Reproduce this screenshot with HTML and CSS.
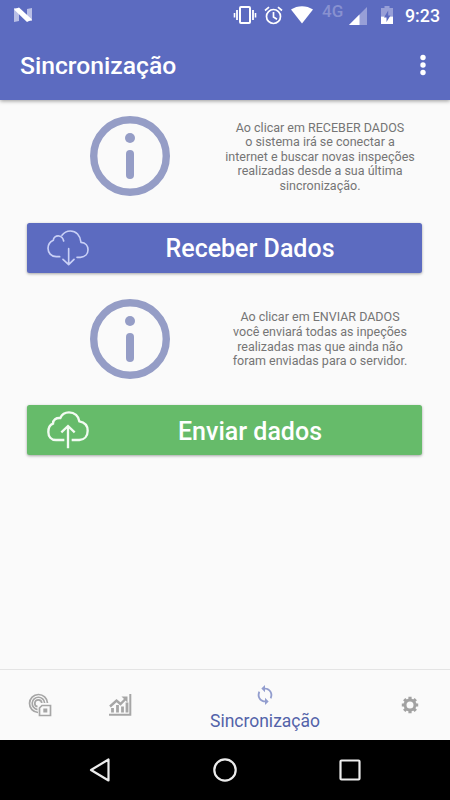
FILE: index.html
```
<!DOCTYPE html>
<html lang="pt-BR">
<head>
    <meta charset="UTF-8">
    <meta name="viewport" content="width=device-width, initial-scale=1.0">
    <title>Sincronização</title>
    <link rel="stylesheet" href="styles.css">
</head>
<body>
    <header class="header">
        <div class="status-bar">
            <svg class="status-logo" width="20" height="16" viewBox="0 0 20 16">
                <path d="M1 1h5v13l-5 1zM14 2l5-1v13h-5z" fill="#b9bfe6"/>
                <path d="M1 2.500L6 .5l13 12-5 2.500z" fill="#fff"/>
            </svg>
            <svg class="status-vibrate" width="24" height="20" viewBox="0 0 24 20" fill="none" stroke="#fff">
                <rect x="7" y="2" width="10" height="16" rx="1" stroke-width="2"/>
                <path d="M4 5v10M20 5v10" stroke-width="1.800"/>
                <path d="M1.500 8v4.500M22.500 8v4.500" stroke-width="1.600"/>
            </svg>
            <svg class="status-alarm" width="19" height="19" viewBox="0 0 19 19" fill="none" stroke="#fff" stroke-width="1.700">
                <circle cx="9.500" cy="10.500" r="7"/>
                <path d="M9.500 6v5l3.500 2.200M1 4.500L5 1.200M18 4.500L14 1.200"/>
            </svg>
            <svg class="status-wifi" width="22" height="18" viewBox="0 0 22 18">
                <path d="M0 3.500C6.500-1 15.500-1 22 3.500L11 17.500z" fill="#fff"/>
            </svg>
            <span class="network">4G</span>
            <svg class="status-signal" width="18" height="18" viewBox="0 0 18 18">
                <path d="M0 18L18 0v18z" fill="#979fd7"/>
                <path d="M0 18L10.500 7.500V18z" fill="#fff"/>
            </svg>
            <svg class="status-battery" width="12" height="18" viewBox="0 0 12 18">
                <path d="M0 2h3.500V0h5v2H12v8.500H0z" fill="#979fd7"/>
                <path d="M0 10.500h12V18H0z" fill="#fff"/>
                <path d="M7.200 4.500L3 11.500h2.500V16L9.500 9.500H7.200z" fill="#5c6bc0"/>
            </svg>
            <span class="clock">9:23</span>
        </div>
        <div class="toolbar">
            <h1>Sincronização</h1>
            <svg width="6" height="22" viewBox="0 0 6 22" fill="#fff">
                <circle cx="3" cy="3.500" r="2.700"/>
                <circle cx="3" cy="11" r="2.700"/>
                <circle cx="3" cy="18.500" r="2.700"/>
            </svg>
        </div>
    </header>

    <main class="content">
        <div class="info">
            <svg class="info-icon" width="80" height="80" viewBox="0 0 80 80" fill="#959dc6">
                <circle cx="40" cy="40" r="36.300" fill="none" stroke="#959dc6" stroke-width="7.400"/>
                <circle cx="40" cy="22" r="5"/>
                <rect x="36" y="34" width="8" height="29" rx="4"/>
            </svg>
            <p>Ao clicar em RECEBER DADOS<br>o sistema irá se conectar a<br>internet e buscar novas inspeções<br>realizadas desde a sua última<br>sincronização.</p>
        </div>
        <button class="btn btn-receive">
            <svg width="42" height="36" viewBox="80 358 126 108" fill="none" stroke="#c9d0f6" stroke-width="5" stroke-linecap="round" stroke-linejoin="round">
                <path d="M118 438H108C92 438 83 426 83 413C83 400 90 393 99 389C99 380 107 375 116 376C123 377 128 382 130 391"/>
                <path d="M125 374C132 364 140 361 150 361C167 361 180 374 182 395C196 396 203 406 203 417C203 430 194 439 180 440H170"/>
                <path d="M145 414V461M128 446L145 462L161 446"/>
            </svg>
            <span>Receber Dados</span>
        </button>
        <div class="info">
            <svg class="info-icon" width="80" height="80" viewBox="0 0 80 80" fill="#959dc6">
                <circle cx="40" cy="40" r="36.300" fill="none" stroke="#959dc6" stroke-width="7.400"/>
                <circle cx="40" cy="22" r="5"/>
                <rect x="36" y="34" width="8" height="29" rx="4"/>
            </svg>
            <p>Ao clicar em ENVIAR DADOS<br>você enviará todas as inpeções<br>realizadas mas que ainda não<br>foram enviadas para o servidor.</p>
        </div>
        <button class="btn btn-send">
            <svg width="42" height="38" viewBox="80 363 126 114" fill="none" stroke="#f2fbf2" stroke-width="7">
                <path d="M132 450H107C92 450 84 439 84 426C84 412 90 404 98 401C98 389 107 383 120 384C125 372 134 367 146 367C163 367 175 379 177 394C194 397 202 408 202 422C202 438 192 449 177 450H154"/>
                <path d="M143 475V408M123 427L143 408L163 427"/>
            </svg>
            <span>Enviar dados</span>
        </button>
    </main>

    <nav class="tabs">
        <a class="tab" href="#">
            <svg width="24" height="24" viewBox="0 0 24 24" fill="none" stroke="#a6a6a6" stroke-width="1.700">
                <path d="M10 19.500A9 9 0 1 1 19.500 10"/>
                <path d="M9.500 16.600A6.200 6.200 0 1 1 16.600 10"/>
                <path d="M9.500 13.700A3.500 3.500 0 1 1 13.800 10"/>
                <path d="M14 12.500h8.500v10H11.500v-7.500z"/>
                <rect x="15.300" y="15.500" width="4" height="4" fill="#a6a6a6" stroke="none"/>
            </svg>
        </a>
        <a class="tab" href="#">
            <svg width="24" height="24" viewBox="0 0 24 24" fill="none" stroke="#a6a6a6">
                <path d="M1 21.800h21.300V1" stroke-width="2"/>
                <path d="M4.500 19.500V15M9.500 19.500V12M14.500 19.500v-6M19 19.500v-10" stroke-width="2.800"/>
                <path d="M2 13.500L8.500 7.500L12.500 11L18 5.500" stroke-width="2.400"/>
                <path d="M13.500 3.500h6v6z" fill="#a6a6a6" stroke="none"/>
            </svg>
        </a>
        <a class="tab tab-active" href="#">
            <svg width="22" height="22" viewBox="0 0 24 24" fill="#929dce">
                <path d="M12 4V1L8 5l4 4V6c3.310 0 6 2.690 6 6 0 1.010-.25 1.970-.7 2.800l1.460 1.460C19.540 15.030 20 13.570 20 12c0-4.420-3.580-8-8-8zm0 14c-3.310 0-6-2.690-6-6 0-1.010.25-1.970.7-2.800L5.240 7.740C4.460 8.970 4 10.430 4 12c0 4.420 3.580 8 8 8v3l4-4-4-4v3z"/>
            </svg>
            <span>Sincronização</span>
        </a>
        <a class="tab" href="#">
            <svg width="18" height="18" viewBox="0 0 18 18" fill="none" stroke="#a2a2a2">
                <circle cx="9" cy="9" r="5" stroke-width="3"/>
                <path d="M9 .8v3M9 14.200v3M.8 9h3M14.200 9h3M3.200 3.200l2 2M12.800 12.800l2 2M3.200 14.800l2-2M12.800 5.200l2-2" stroke-width="3.200"/>
            </svg>
        </a>
    </nav>

    <footer class="system-nav">
        <svg width="24" height="26" viewBox="0 0 24 26" fill="none" stroke="#ececec" stroke-width="2.200" stroke-linejoin="round">
            <path d="M20.500 2.500v21L3 13z"/>
        </svg>
        <svg width="26" height="26" viewBox="0 0 26 26" fill="none" stroke="#ececec" stroke-width="2.200">
            <circle cx="13" cy="13" r="10.700"/>
        </svg>
        <svg width="24" height="24" viewBox="0 0 24 24" fill="none" stroke="#ececec" stroke-width="2.200">
            <rect x="2.500" y="2.500" width="19" height="19" rx="1"/>
        </svg>
    </footer>
</body>
</html>
```
FILE: styles.css
```
* {
    box-sizing: border-box;
}
body {
    margin: 0;
    height: 800px;
    display: flex;
    flex-direction: column;
    font-family: Roboto, sans-serif;
    background-color: #fafafa;
    overflow: hidden;
}
.header {
    height: 100px;
    background-color: #5c6bc0;
    color: #fff;
    box-shadow: 0 1px 4px rgba(0, 0, 0, 0.4);
}
.status-bar {
    display: flex;
    align-items: center;
    height: 30px;
    padding: 0 10px 0 13px;
}
.status-vibrate {
    margin-left: auto;
    margin-right: 7px;
}
.status-alarm {
    margin-right: 8px;
}
.status-wifi {
    margin-right: 9px;
}
.network {
    width: 27px;
    height: 26px;
    font-size: 17px;
    line-height: 18px;
    font-weight: 500;
    color: #8891d0;
}
.status-signal {
    margin-top: 2px;
    margin-right: 14px;
}
.status-battery {
    margin-right: 12px;
}
.clock {
    width: 35px;
    padding-top: 1px;
    font-size: 17.800px;
    line-height: 30px;
    font-weight: 500;
}
.toolbar {
    display: flex;
    align-items: center;
    justify-content: space-between;
    height: 70px;
    padding: 0 24px 0 20px;
}
.toolbar h1 {
    margin: 2px 0 0;
    font-size: 24.700px;
    line-height: 30px;
    font-weight: 500;
}
.content {
    flex: 1;
    padding: 16px 27px 0;
}
.info {
    display: flex;
    align-items: center;
    height: 80px;
}
.info-icon {
    flex: none;
    margin-left: 63px;
}
.info p {
    width: 220px;
    flex: none;
    margin: 2px 0 0 40px;
    font-size: 12.500px;
    line-height: 14.600px;
    text-align: center;
    color: #757575;
}
.btn {
    display: flex;
    align-items: center;
    width: 395px;
    height: 50px;
    margin: 26.500px 0 26px;
    padding: 0 0 0 20px;
    border: none;
    border-radius: 2.500px;
    font-family: inherit;
    font-size: 25px;
    font-weight: 500;
    color: #fff;
    box-shadow: 0 1px 3px rgba(0, 0, 0, 0.35);
}
.btn span {
    width: 322px;
    padding-top: 2px;
    text-align: center;
}
.btn-receive {
    background-color: #5c6bc0;
}
.btn-send {
    background-color: #66bb6a;
}
.tabs {
    display: grid;
    grid-template-columns: 80px 80px 210px 80px;
    height: 71px;
    border-top: 1px solid #e4e4e4;
}
.tab {
    display: flex;
    flex-direction: column;
    align-items: center;
    justify-content: center;
    text-decoration: none;
}
.tab-active {
    justify-content: flex-start;
    padding-top: 14px;
    font-size: 17.500px;
    line-height: 31px;
    color: #5363a9;
}
.system-nav {
    display: flex;
    align-items: center;
    justify-content: space-between;
    height: 60px;
    padding: 0 88px;
    background-color: #000;
}
```
